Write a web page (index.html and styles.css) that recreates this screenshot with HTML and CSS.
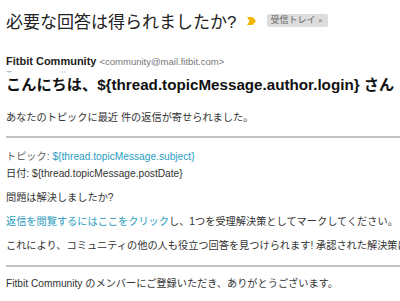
FILE: index.html
```html
<!DOCTYPE html>
<html lang="ja">
<head>
    <meta charset="UTF-8">
    <title>必要な回答は得られましたか?</title>
    <link rel="stylesheet" href="styles.css">
</head>
<body>
    <div class="subject-row">
        <h1 class="subject">必要な回答は得られましたか?</h1>
        <svg class="importance" width="9" height="8" viewBox="0 0 9 8">
            <path d="M0 0 H5.5 L9 4 L5.5 8 H0 L2.5 4 Z" fill="#f4b400"/>
        </svg>
        <span class="label">受信トレイ <span class="label-x">×</span></span>
    </div>

    <div class="sender">
        <span class="sender-name">Fitbit Community</span>
        <span class="sender-mail">&lt;community@mail.fitbit.com&gt;</span>
    </div>
    <div class="recipient">To: me &nbsp; &nbsp; &nbsp; &nbsp; ¦¦</div>

    <div class="message">
        <h2 class="greeting">こんにちは、${thread.topicMessage.author.login} さん</h2>
        <p class="intro">あなたのトピックに最近 件の返信が寄せられました。</p>
        <hr>
        <p class="meta">
            <span class="muted">トピック:</span> <a href="#">${thread.topicMessage.subject}</a><br>
            日付: ${thread.topicMessage.postDate}
        </p>
        <p>問題は解決しましたか?</p>
        <p><a href="#">返信を閲覧するにはここをクリック</a>し、1つを受理解決策としてマークしてください。</p>
        <p>これにより、コミュニティの他の人も役立つ回答を見つけられます! 承認された解決策は</p>
        <hr class="rule-bottom">
        <p class="thanks">Fitbit Community のメンバーにご登録いただき、ありがとうございます。</p>
    </div>
</body>
</html>
```

FILE: styles.css
```css
body {
    margin: 0;
    padding: 0 0 0 6px;
    font-family: Arial, "Liberation Sans", "Noto Sans CJK JP", sans-serif;
    color: #222;
    background: #fff;
    overflow: hidden;
}

.subject-row {
    display: flex;
    align-items: center;
    height: 40px;
    white-space: nowrap;
}

.subject {
    margin: 0;
    font-size: 17px;
    font-weight: normal;
    color: #222;
}

.importance {
    margin: 1px 11px 0 11px;
}

.label {
    background: #ddd;
    color: #666;
    font-size: 9px;
    line-height: 13px;
    padding: 0 5px 0 3px;
    border-radius: 2px;
}

.label-x {
    color: #777;
    font-size: 8px;
}

.sender {
    margin-top: 14px;
    font-size: 11px;
    line-height: 15px;
    white-space: nowrap;
}

.sender-name {
    font-weight: bold;
    color: #222;
}

.sender-mail {
    font-size: 9.5px;
    color: #777;
}

.recipient {
    height: 4px;
    overflow: hidden;
    font-size: 10px;
    line-height: 14px;
    color: #bbb;
    white-space: nowrap;
}

.greeting {
    margin: 1px 0 0;
    font-size: 15.2px;
    font-weight: bold;
    color: #111;
    white-space: nowrap;
    line-height: 22px;
}

.message p {
    margin: 0 0 7px;
    font-size: 10.2px;
    line-height: 17px;
    color: #333;
    white-space: nowrap;
}

.message .intro {
    margin-top: 13px;
}

.message hr {
    border: 0;
    border-top: 2px solid #c2c2c2;
    margin: 10px 0 10px;
}

.message .rule-bottom {
    margin: 11px 0 8px;
}

.message a {
    color: #2a9dc0;
    text-decoration: none;
}

.muted {
    color: #666;
}
```
